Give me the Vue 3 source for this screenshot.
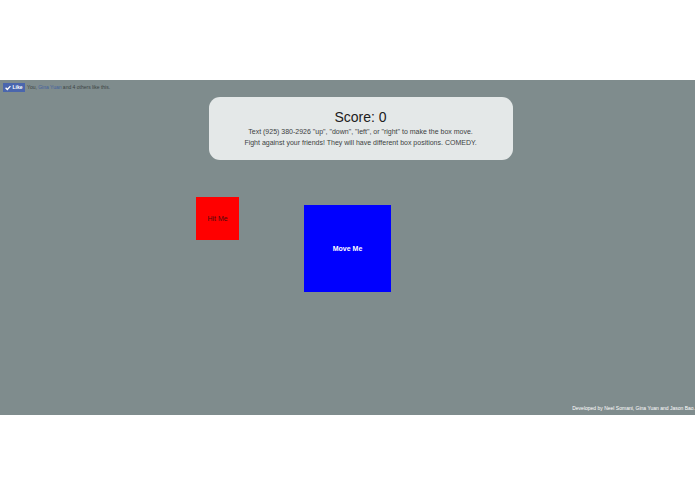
<script setup>
import { ref } from 'vue'

const score = ref(0)
const liked = ref(true)
</script>

<template>
  <div class="page">
    <main class="game">
      <div class="social">
        <button class="like" type="button" :aria-pressed="liked" @click="liked = !liked">
          <svg class="check" viewBox="0 0 6 6" aria-hidden="true">
            <path d="M0.6 2.8 L2.3 4.5 L5.4 1.1" fill="none" stroke="#fff" stroke-width="1.3" />
          </svg>
          Like
        </button>
        <span>You, <a href="#">Gina Yuan</a> and 4 others like this.</span>
      </div>

      <header class="card">
        <h1>Score: {{ score }}</h1>
        <p>Text (925) 380-2926 "up", "down", "left", or "right" to make the box move.</p>
        <p>Fight against your friends! They will have different box positions. COMEDY.</p>
      </header>

      <section class="arena">
        <div class="box target">Hit Me</div>
        <div class="box player">Move Me</div>
      </section>

      <footer>Developed by Neel Somani, Gina Yuan and Jason Bao.</footer>
    </main>
  </div>
</template>

<style>
body {
  margin: 0;
  background: #fff;
}
</style>

<style scoped>
.page {
  box-sizing: border-box;
  min-height: 100vh;
  padding: 80px 0 79px;
  display: flex;
  font-family: "Liberation Sans", Arial, sans-serif;
  color: #3c4242;
}

.game {
  flex: 1;
  display: flex;
  flex-direction: column;
  background: #7f8c8d;
}

.social {
  display: flex;
  align-items: center;
  gap: 2px;
  height: 9px;
  padding: 3px 3px 0;
  font-size: 5px;
  line-height: 9px;
  color: #3b4343;
}

.social a {
  color: #3f5f9f;
  text-decoration: none;
}

.like {
  display: flex;
  align-items: center;
  justify-content: center;
  gap: 1px;
  width: 22px;
  height: 9px;
  padding: 0;
  border: 0;
  background: #4a66ad;
  color: #fff;
  font: bold 5px/9px "Liberation Sans", Arial, sans-serif;
}

.check {
  width: 6px;
  height: 6px;
}

.card {
  box-sizing: border-box;
  width: 43.75%;
  margin: 5px 0 0 30%;
  padding: 12px 8px;
  border-radius: 11px;
  background: #e4e8e8;
  text-align: center;
}

.card h1 {
  margin: 0;
  font-size: 14px;
  line-height: 17px;
  font-weight: normal;
  color: #1c2020;
}

.card p {
  margin: 0;
  font-size: 7px;
  line-height: 11px;
}

.arena {
  position: relative;
  flex: 1;
  min-height: 140px;
}

.box {
  position: absolute;
  display: flex;
  align-items: center;
  justify-content: center;
  font-size: 7px;
}

.target {
  left: 196px;
  top: 37px;
  width: 43px;
  height: 43px;
  background: #f00;
  color: #4d0b0b;
}

.player {
  left: 304px;
  top: 45px;
  width: 87px;
  height: 87px;
  background: #00f;
  color: #fff;
  font-weight: bold;
}

footer {
  padding: 0 0 2px;
  font-size: 5px;
  line-height: 9px;
  text-align: right;
  color: #fff;
}
</style>
